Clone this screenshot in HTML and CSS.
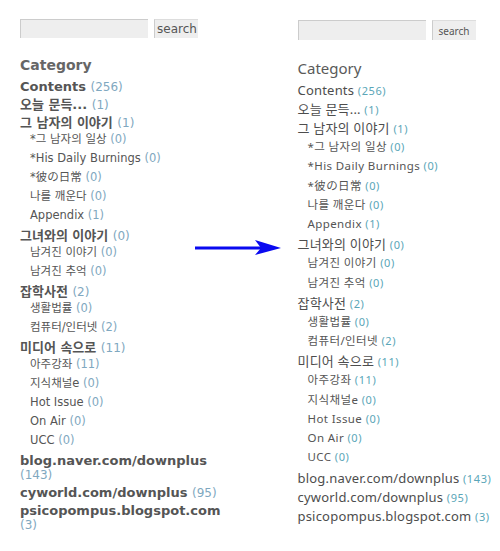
FILE: index.html
```html
<!DOCTYPE html>
<html lang="ko">
<head>
    <meta charset="UTF-8">
    <title>Category - before / after</title>
    <link rel="stylesheet" href="styles.css">
</head>
<body>
    <div class="compare">
        <!-- before -->
        <div class="side side-old">
            <form class="search">
                <input type="text" class="search-input">
                <button type="button" class="search-btn">search</button>
            </form>
            <h2 class="cat-title">Category</h2>
            <ul class="cat-list">
                <li class="top">Contents <span class="cnt">(256)</span></li>
                <li class="top">오늘 문득... <span class="cnt">(1)</span></li>
                <li class="top">그 남자의 이야기 <span class="cnt">(1)</span></li>
                <li class="sub">*그 남자의 일상 <span class="cnt">(0)</span></li>
                <li class="sub">*His Daily Burnings <span class="cnt">(0)</span></li>
                <li class="sub">*彼の日常 <span class="cnt">(0)</span></li>
                <li class="sub">나를 깨운다 <span class="cnt">(0)</span></li>
                <li class="sub">Appendix <span class="cnt">(1)</span></li>
                <li class="top">그녀와의 이야기 <span class="cnt">(0)</span></li>
                <li class="sub">남겨진 이야기 <span class="cnt">(0)</span></li>
                <li class="sub">남겨진 추억 <span class="cnt">(0)</span></li>
                <li class="top">잡학사전 <span class="cnt">(2)</span></li>
                <li class="sub">생활법률 <span class="cnt">(0)</span></li>
                <li class="sub">컴퓨터/인터넷 <span class="cnt">(2)</span></li>
                <li class="top">미디어 속으로 <span class="cnt">(11)</span></li>
                <li class="sub">아주강좌 <span class="cnt">(11)</span></li>
                <li class="sub">지식채널e <span class="cnt">(0)</span></li>
                <li class="sub">Hot Issue <span class="cnt">(0)</span></li>
                <li class="sub">On Air <span class="cnt">(0)</span></li>
                <li class="sub">UCC <span class="cnt">(0)</span></li>
                <li class="top">blog.naver.com/downplus <span class="cnt">(143)</span></li>
                <li class="top">cyworld.com/downplus <span class="cnt">(95)</span></li>
                <li class="top">psicopompus.blogspot.com <span class="cnt">(3)</span></li>
            </ul>
        </div>

        <!-- after -->
        <div class="side side-new">
            <form class="search">
                <input type="text" class="search-input">
                <button type="button" class="search-btn">search</button>
            </form>
            <h2 class="cat-title">Category</h2>
            <ul class="cat-list">
                <li class="top">Contents <span class="cnt">(256)</span></li>
                <li class="top">오늘 문득... <span class="cnt">(1)</span></li>
                <li class="top">그 남자의 이야기 <span class="cnt">(1)</span></li>
                <li class="sub">*그 남자의 일상 <span class="cnt">(0)</span></li>
                <li class="sub">*His Daily Burnings <span class="cnt">(0)</span></li>
                <li class="sub">*彼の日常 <span class="cnt">(0)</span></li>
                <li class="sub">나를 깨운다 <span class="cnt">(0)</span></li>
                <li class="sub">Appendix <span class="cnt">(1)</span></li>
                <li class="top">그녀와의 이야기 <span class="cnt">(0)</span></li>
                <li class="sub">남겨진 이야기 <span class="cnt">(0)</span></li>
                <li class="sub">남겨진 추억 <span class="cnt">(0)</span></li>
                <li class="top">잡학사전 <span class="cnt">(2)</span></li>
                <li class="sub">생활법률 <span class="cnt">(0)</span></li>
                <li class="sub">컴퓨터/인터넷 <span class="cnt">(2)</span></li>
                <li class="top">미디어 속으로 <span class="cnt">(11)</span></li>
                <li class="sub">아주강좌 <span class="cnt">(11)</span></li>
                <li class="sub">지식채널e <span class="cnt">(0)</span></li>
                <li class="sub">Hot Issue <span class="cnt">(0)</span></li>
                <li class="sub">On Air <span class="cnt">(0)</span></li>
                <li class="sub">UCC <span class="cnt">(0)</span></li>
                <li class="top">blog.naver.com/downplus <span class="cnt">(143)</span></li>
                <li class="top">cyworld.com/downplus <span class="cnt">(95)</span></li>
                <li class="top">psicopompus.blogspot.com <span class="cnt">(3)</span></li>
            </ul>
        </div>

        <svg class="arrow" width="90" height="20" viewBox="0 0 90 20">
            <line x1="0" y1="10" x2="70" y2="10" stroke="#0a0af0" stroke-width="3"/>
            <polygon points="60,2 86,10 60,17 66,10" fill="#0a0af0"/>
        </svg>
    </div>
</body>
</html>
```

FILE: styles.css
```css
body {
    margin: 0;
    background: #fff;
    color: #555;
}

.compare {
    position: relative;
    display: flex;
    align-items: flex-start;
}

.side {
    width: 205px;
}

.side-old {
    margin-left: 20px;
    font-family: "DejaVu Sans", Verdana, "Noto Sans CJK KR", sans-serif;
}

.side-new {
    margin-left: 75px;
    font-family: "Noto Sans", "Noto Sans CJK KR", sans-serif;
}

/* search box */
.search {
    display: flex;
    gap: 6px;
    margin: 0;
}

.search-input {
    width: 128px;
    height: 19px;
    box-sizing: border-box;
    margin: 0;
    padding: 0;
    background: #eee;
    border: none;
    border-top: 1px solid #ccc;
    border-left: 1px solid #ccc;
}

.search-btn {
    width: 44px;
    height: 19px;
    box-sizing: border-box;
    margin: 0;
    padding: 0 0 0 2px;
    background: #eee;
    border: none;
    border-top: 1px solid #ddd;
    border-left: 1px solid #ccc;
    color: #555;
    font-family: inherit;
    font-size: 12px;
    text-align: left;
}

.cat-title {
    margin: 0;
    font-weight: bold;
    color: #666;
}

.cat-list {
    list-style: none;
    margin: 0;
    padding: 0;
}

.cnt {
    font-weight: normal;
}

/* old version */
.side-old .search {
    margin-top: 19px;
}

.side-old .cat-title {
    margin-top: 18px;
    font-size: 14px;
    line-height: 18px;
}

.side-old .cat-list {
    margin-top: 2px;
}

.side-old .top {
    padding-top: 4px;
    font-size: 13px;
    font-weight: bold;
    line-height: 14px;
    color: #555;
}

.side-old .top .cnt {
    font-size: 12px;
}

.side-old .sub {
    padding-left: 10px;
    font-size: 11.5px;
    line-height: 19px;
    color: #555;
}

.side-old .cnt {
    color: #7fa8c0;
}

/* new version */
.side-new .search {
    margin-top: 20px;
}

.side-new .search-input,
.side-new .search-btn {
    height: 20px;
}

.side-new .search-btn {
    font-size: 10px;
    padding-left: 6px;
}

.side-new .cat-title {
    margin-top: 18px;
    font-size: 15px;
    font-weight: normal;
    line-height: 20px;
    color: #5a5a5a;
}

.side-new .cat-list {
    margin-top: 2px;
}

.side-new .top {
    padding-top: 2px;
    font-size: 13px;
    letter-spacing: 0.2px;
    line-height: 17px;
    color: #4d4d4d;
}

.side-new .sub + .top {
    margin-top: 1px;
}

.side-new .sub {
    padding-left: 10px;
    font-size: 11.5px;
    letter-spacing: 0.4px;
    line-height: 19.25px;
    color: #555;
}

.side-new .cnt {
    font-size: 11px;
    letter-spacing: 0.6px;
    line-height: 1;
    color: #5aa6b8;
}

/* annotation arrow between the two versions */
.arrow {
    position: absolute;
    left: 195px;
    top: 238px;
}
```
